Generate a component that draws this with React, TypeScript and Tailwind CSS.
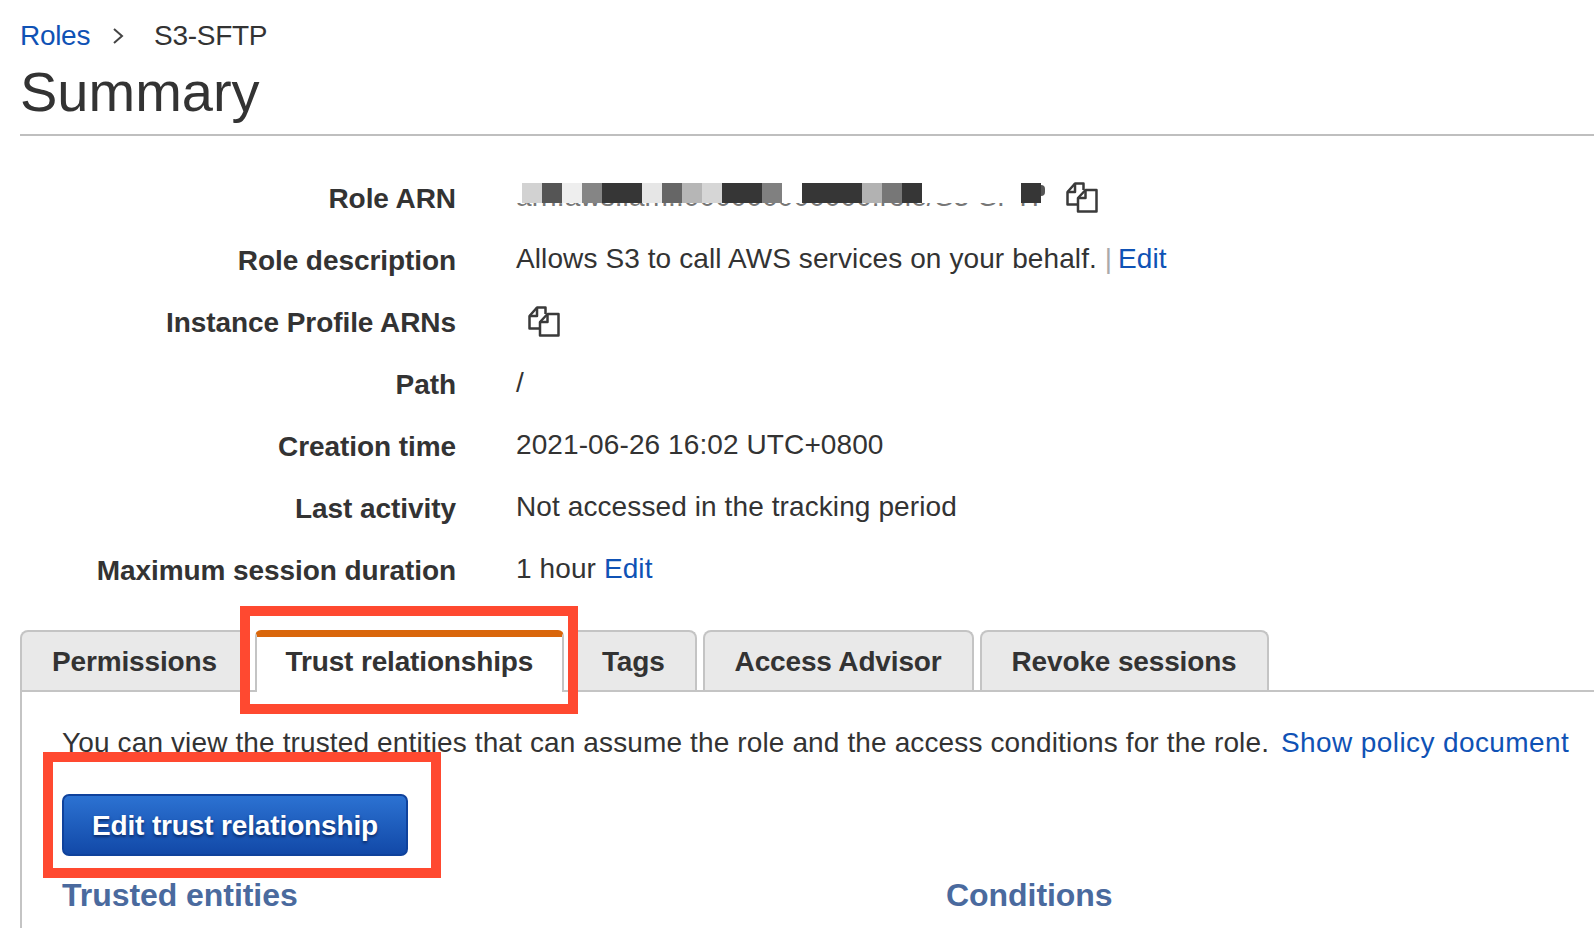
const FONT = "font-['Liberation_Sans',Arial,sans-serif]";

const MOSAIC = [
  "bg-[#d2d2d2]", "bg-[#555555]", "bg-[#eeeeee]", "bg-[#858585]", "bg-[#363636]", "bg-[#363636]", "bg-[#e6e6e6]",
  "bg-[#666666]", "bg-[#b6b6b6]", "bg-[#d6d6d6]", "bg-[#363636]", "bg-[#363636]", "bg-[#808080]", "bg-white",
  "bg-[#363636]", "bg-[#363636]", "bg-[#363636]", "bg-[#b2b2b2]", "bg-[#777777]", "bg-[#363636]",
];

function CopyIcon() {
  return (
    <svg width="32" height="31" viewBox="0 0 32 31" fill="none" stroke="#3a3a3a" strokeWidth="2.5" strokeLinejoin="round">
      <path d="M12 22.5H1.5V10L9 1.5h8.5V8" />
      <path d="M9 1.5V10H1.5" />
      <path d="M12 29.5V16l7.5-8h11v21.5z" fill="white" />
      <path d="M19.5 8v8H12" />
    </svg>
  );
}

function Row({ label, children }: { label: string; children?: React.ReactNode }) {
  return (
    <>
      <div className="h-[62px] text-right text-[28px] leading-[62px] font-bold tracking-[-0.07px] text-[#333]">{label}</div>
      <div className="relative h-[62px] text-[28px] leading-[58px] tracking-[0.1px] whitespace-nowrap text-[#333]">{children}</div>
    </>
  );
}

function Tab({ label, active }: { label: string; active?: boolean }) {
  if (active) {
    return (
      <div className="relative z-10 -mb-[2px] flex h-[62px] w-[309px] items-center justify-center rounded-t-[6px] border-x-2 border-t-[7px] border-x-[#c4c4c4] border-t-[#d9660b] bg-white pb-[5px] text-[28px] font-bold tracking-[-0.15px] text-[#333]">
        {label}
      </div>
    );
  }
  return (
    <div className="flex h-[60px] items-center rounded-t-[8px] border-x-2 border-t-2 border-[#c4c4c4] bg-[#e9e9e9] px-[30px] pt-[2px] text-[28px] font-bold tracking-[-0.15px] text-[#333]">
      {label}
    </div>
  );
}

export default function App() {
  return (
    <div className={`${FONT} relative h-[928px] w-[1594px] overflow-hidden bg-white`}>
      <div className="pl-[20px]">
        <div className="flex h-[54px] items-end text-[28px] leading-[36px] tracking-[-0.3px] text-[#333]">
          <a className="text-[#0f52b5]">Roles</a>
          <svg className="mr-[30px] mb-[9px] ml-[22px]" width="12" height="18" viewBox="0 0 12 18" fill="none" stroke="#444" strokeWidth="2">
            <path d="M2 2l8 7-8 7" />
          </svg>
          <span>S3-SFTP</span>
        </div>
        <h1 className="h-[82px] border-b-2 border-[#bfbfbf] text-[56px] leading-[76px] font-normal text-[#333]">Summary</h1>

        <div className="mt-[32px] grid grid-cols-[436px_1fr] gap-x-[60px]">
          <Row label="Role ARN">
            <span className="leading-[52px] text-[#777]">arn:aws:iam::000000000000:role/S3-SFTP</span>
            <div className="absolute top-0 left-[-20px] h-[35px] w-[560px] bg-white" />
            <div className="absolute top-[15px] left-[6px] flex h-[20px]">
              {MOSAIC.map((c, i) => (
                <div key={i} className={`h-full w-[20px] ${c}`} />
              ))}
            </div>
            <div className="absolute top-[15px] left-[505px] h-[20px] w-[20px] bg-[#363636]" />
            <div className="absolute top-[17px] left-[525px] h-[11px] w-[4px] rounded-r-full bg-[#555]" />
            <div className="absolute top-[14px] left-[550px]">
              <CopyIcon />
            </div>
          </Row>
          <Row label="Role description">
            Allows S3 to call AWS services on your behalf. <span className="text-[#aaa]">|</span>{" "}
            <a className="-ml-[2px] text-[#0f52b5]">Edit</a>
          </Row>
          <Row label="Instance Profile ARNs">
            <div className="absolute top-[14px] left-[12px]">
              <CopyIcon />
            </div>
          </Row>
          <Row label="Path">/</Row>
          <Row label="Creation time">2021-06-26 16:02 UTC+0800</Row>
          <Row label="Last activity">Not accessed in the tracking period</Row>
          <Row label="Maximum session duration">
            1 hour <a className="text-[#0f52b5]">Edit</a>
          </Row>
        </div>

        <div className="mt-[28px] flex items-end gap-[6px] border-b-2 border-[#c4c4c4]">
          <Tab label="Permissions" />
          <Tab label="Trust relationships" active />
          <Tab label="Tags" />
          <Tab label="Access Advisor" />
          <Tab label="Revoke sessions" />
        </div>

        <div className="h-[300px] border-l-2 border-[#c4c4c4] pt-[33px] pl-[40px]">
          <p className="text-[28px] leading-[36px] tracking-[0.13px] whitespace-nowrap text-[#333]">
            You can view the trusted entities that can assume the role and the access conditions for the role.{" "}
            <a className="ml-[4px] tracking-[0.4px] text-[#0f52b5]">Show policy document</a>
          </p>
          <button className="mt-[33px] block h-[62px] w-[346px] rounded-[7px] border-2 border-[#0f429c] bg-gradient-to-b from-[#2c72d2] to-[#1249a8] pt-[2px] text-[28px] font-bold tracking-[-0.14px] text-white [text-shadow:0_2px_3px_#0a2a66]">
            Edit trust relationship
          </button>
          <div className="mt-[20px] grid grid-cols-[884px_1fr] text-[32px] leading-[38px] font-bold tracking-[-0.05px] text-[#4a6a9e]">
            <div>Trusted entities</div>
            <div>Conditions</div>
          </div>
        </div>
      </div>

      <div className="absolute top-[606px] left-[240px] h-[108px] w-[338px] border-[10px] border-[#ff4930]" />
      <div className="absolute top-[752px] left-[43px] h-[126px] w-[398px] border-[10px] border-[#ff4930]" />
    </div>
  );
}
